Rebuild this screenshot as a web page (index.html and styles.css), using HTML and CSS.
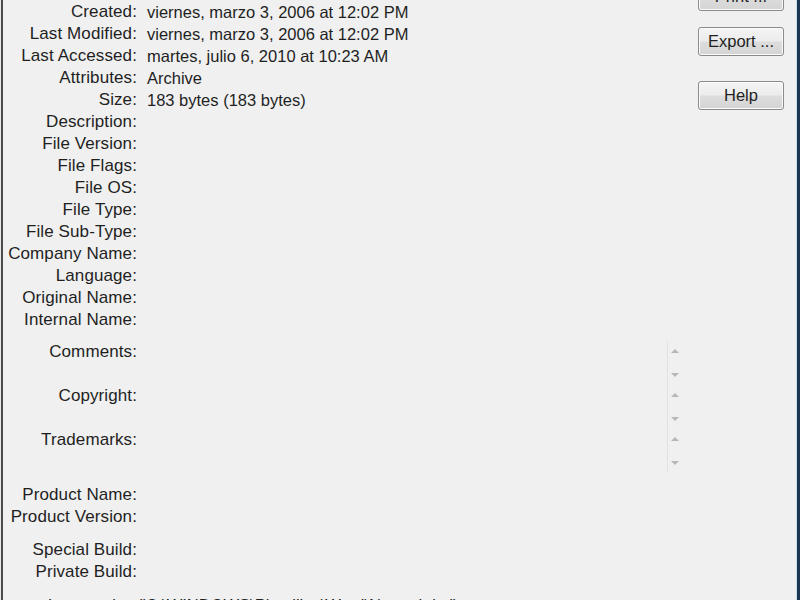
FILE: index.html
```html
<!DOCTYPE html>
<html>
<head>
<meta charset="utf-8">
<link rel="stylesheet" href="styles.css">
</head>
<body>
<div class="window">
  <div class="frame-left"></div>
  <div class="main">
    <div class="grid">
      <div class="label">Created:</div><div class="value">viernes, marzo 3, 2006 at 12:02 PM</div>
      <div class="label">Last Modified:</div><div class="value">viernes, marzo 3, 2006 at 12:02 PM</div>
      <div class="label">Last Accessed:</div><div class="value">martes, julio 6, 2010 at 10:23 AM</div>
      <div class="label">Attributes:</div><div class="value">Archive</div>
      <div class="label">Size:</div><div class="value">183 bytes (183 bytes)</div>
      <div class="label">Description:</div><div class="value"></div>
      <div class="label">File Version:</div><div class="value"></div>
      <div class="label">File Flags:</div><div class="value"></div>
      <div class="label">File OS:</div><div class="value"></div>
      <div class="label">File Type:</div><div class="value"></div>
      <div class="label">File Sub-Type:</div><div class="value"></div>
      <div class="label">Company Name:</div><div class="value"></div>
      <div class="label">Language:</div><div class="value"></div>
      <div class="label">Original Name:</div><div class="value"></div>
      <div class="label">Internal Name:</div><div class="value"></div>
    </div>
    <div class="grid multi">
      <div class="label">Comments:</div>
      <div class="value field"><div class="text"></div><div class="scroll"><span class="up"></span><span class="down"></span></div></div>
      <div class="label">Copyright:</div>
      <div class="value field"><div class="text"></div><div class="scroll"><span class="up"></span><span class="down"></span></div></div>
      <div class="label">Trademarks:</div>
      <div class="value field"><div class="text"></div><div class="scroll"><span class="up"></span><span class="down"></span></div></div>
    </div>
    <div class="grid section">
      <div class="label">Product Name:</div><div class="value"></div>
      <div class="label">Product Version:</div><div class="value"></div>
    </div>
    <div class="grid section">
      <div class="label">Special Build:</div><div class="value"></div>
      <div class="label">Private Build:</div><div class="value"></div>
    </div>
    <div class="footer-line">Long path:&nbsp;&nbsp; "C:\WINDOWS\Plantillas\Word\Normal.dot"</div>
  </div>
  <div class="buttons">
    <button class="btn print">Print ...</button>
    <button class="btn export">Export ...</button>
    <button class="btn help">Help</button>
  </div>
  <div class="frame-right"></div>
</div>
</body>
</html>
```

FILE: styles.css
```css
html, body {
  margin: 0;
  padding: 0;
  height: 100%;
  overflow: hidden;
  background: #f0f0f0;
}

.window {
  display: flex;
  height: 600px;
  font-family: "Liberation Sans", Arial, sans-serif;
  font-size: 16.5px;
  color: #1f1f1f;
}

.frame-left {
  width: 1px;
  border-right: 2px solid #4a4a4a;
  background: #e8e8e8;
  flex: none;
}

.main {
  flex: 1;
  padding-top: 1px;
  padding-right: 17px;
  min-width: 0;
}

.grid {
  display: grid;
  grid-template-columns: 134px 1fr;
  column-gap: 10px;
  grid-auto-rows: 22px;
  line-height: 22px;
}

.label {
  text-align: right;
  white-space: nowrap;
  font-size: 17px;
  letter-spacing: 0.1px;
}

.value {
  white-space: nowrap;
}

.multi {
  margin-top: 10px;
  grid-auto-rows: 44px;
}

.field {
  display: flex;
  justify-content: flex-end;
}

.field .text {
  flex: 1;
}

.scroll {
  width: 13px;
  border-left: 1px solid #e2e2e2;
  position: relative;
}

.scroll .up,
.scroll .down {
  position: absolute;
  left: 3px;
  width: 0;
  height: 0;
  border-left: 4px solid transparent;
  border-right: 4px solid transparent;
}

.scroll .up {
  top: 8px;
  border-bottom: 4px solid #b8b8b8;
}

.scroll .down {
  top: 32px;
  border-top: 4px solid #b8b8b8;
}

.section {
  margin-top: 11px;
}

.footer-line {
  margin-top: 11px;
  padding-left: 45px;
  line-height: 22px;
  white-space: nowrap;
}

.buttons {
  width: 86px;
  flex: none;
  display: flex;
  flex-direction: column;
  margin-right: 12px;
}

.btn {
  height: 29px;
  width: 86px;
  border: 1px solid #8a8a8a;
  border-radius: 3px;
  background: linear-gradient(#f4f4f4 0%, #ececec 48%, #dddddd 52%, #d4d4d4 100%);
  box-shadow: inset 0 0 0 1px #fbfbfb;
  font-family: "Liberation Sans", Arial, sans-serif;
  font-size: 16.5px;
  color: #1f1f1f;
  padding: 0;
}

.print {
  margin-top: -18px;
}

.export {
  margin-top: 16px;
}

.help {
  margin-top: 25px;
}

.frame-right {
  width: 4px;
  flex: none;
  border-left: 1px solid #c6e2f2;
  background: #1d3550;
  box-sizing: border-box;
}
```
